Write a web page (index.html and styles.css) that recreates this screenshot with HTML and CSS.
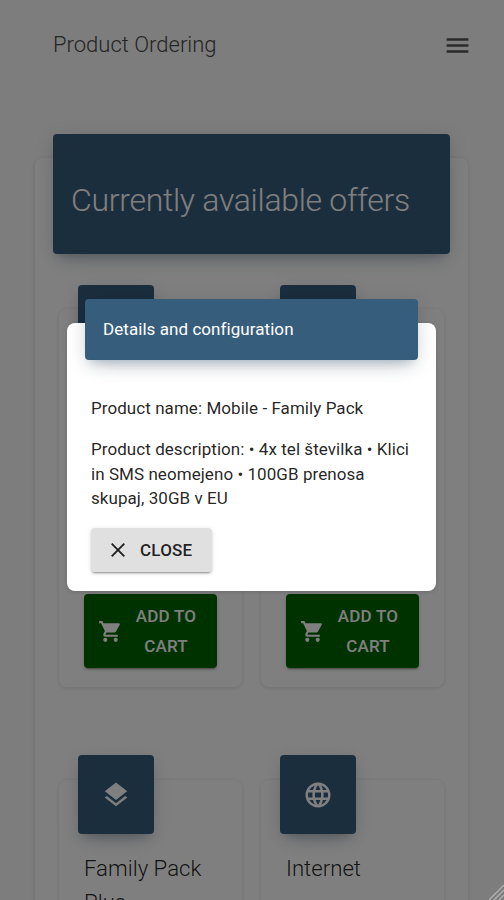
FILE: index.html
```html
<!DOCTYPE html>
<html lang="en">
<head>
<meta charset="utf-8">
<title>Product Ordering</title>
<link rel="stylesheet" href="styles.css">
</head>
<body>
<div class="page">
  <header class="toolbar">
    <div class="title">Product Ordering</div>
    <svg class="menu" viewBox="0 0 24 24"><path d="M3 6H21V8H3V6M3 11H21V13H3V11M3 16H21V18H3V16Z"/></svg>
  </header>
  <main class="offers">
    <div class="banner"><h1>Currently available offers</h1></div>
    <div class="grid">
      <article class="product">
        <div class="tile"></div>
        <button class="cart"><svg viewBox="0 0 24 24"><path d="M17 18a2 2 0 1 1 0 4 2 2 0 0 1 0-4M1 2h3.27l.94 2H20a1 1 0 0 1 1 1c0 .17-.05.34-.12.5l-3.58 6.47c-.34.61-1 1.03-1.75 1.03H8.1l-.9 1.63-.03.12a.25.25 0 0 0 .25.25H19v2H7a2 2 0 0 1-2-2c0-.35.09-.68.24-.96l1.36-2.45L3 4H1V2m6 16a2 2 0 1 1 0 4 2 2 0 0 1 0-4Z"/></svg><span>ADD TO CART</span></button>
      </article>
      <article class="product">
        <div class="tile"></div>
        <button class="cart"><svg viewBox="0 0 24 24"><path d="M17 18a2 2 0 1 1 0 4 2 2 0 0 1 0-4M1 2h3.27l.94 2H20a1 1 0 0 1 1 1c0 .17-.05.34-.12.5l-3.58 6.47c-.34.61-1 1.03-1.75 1.03H8.1l-.9 1.63-.03.12a.25.25 0 0 0 .25.25H19v2H7a2 2 0 0 1-2-2c0-.35.09-.68.24-.96l1.36-2.45L3 4H1V2m6 16a2 2 0 1 1 0 4 2 2 0 0 1 0-4Z"/></svg><span>ADD TO CART</span></button>
      </article>
      <article class="product">
        <div class="tile"><svg viewBox="0 0 24 24"><path d="M12 16 19.36 10.27 21 9 12 2 3 9 4.63 10.27M12 18.54 4.62 12.81 3 14.07 12 21.07 21 14.07 19.37 12.8 12 18.54Z"/></svg></div>
        <h2>Family Pack Plus</h2>
      </article>
      <article class="product">
        <div class="tile"><svg viewBox="0 0 24 24"><path d="M16.36 14c.08-.66.14-1.32.14-2s-.06-1.34-.14-2h3.38c.16.64.26 1.31.26 2s-.1 1.36-.26 2m-5.15 5.56c.6-1.11 1.06-2.31 1.38-3.56h2.95a8.03 8.03 0 0 1-4.33 3.56M14.34 14H9.66c-.1-.66-.16-1.32-.16-2s.06-1.35.16-2h4.68c.09.65.16 1.32.16 2s-.07 1.34-.16 2M12 19.96c-.83-1.2-1.5-2.53-1.91-3.96h3.82c-.41 1.43-1.08 2.76-1.91 3.96M8 8H5.08A7.92 7.92 0 0 1 9.4 4.44C8.8 5.55 8.35 6.75 8 8m-2.92 8H8c.35 1.25.8 2.45 1.4 3.56A8 8 0 0 1 5.08 16m-.82-2C4.1 13.36 4 12.69 4 12s.1-1.36.26-2h3.38c-.08.66-.14 1.32-.14 2s.06 1.34.14 2M12 4.03c.83 1.2 1.5 2.54 1.91 3.97h-3.82c.41-1.43 1.08-2.77 1.91-3.97M18.92 8h-2.95a15.7 15.7 0 0 0-1.38-3.56c1.84.63 3.37 1.9 4.33 3.56M12 2C6.47 2 2 6.5 2 12a10 10 0 1 0 10-10Z"/></svg></div>
        <h2>Internet</h2>
      </article>
    </div>
  </main>
</div>
<div class="overlay">
  <section class="dialog">
    <div class="dialog-title">Details and configuration</div>
    <p>Product name: Mobile - Family Pack</p>
    <p>Product description: • 4x tel številka • Klici in SMS neomejeno • 100GB prenosa skupaj, 30GB v EU</p>
    <button class="close"><svg viewBox="0 0 14 14"><path d="M.7.7 13.3 13.3M13.3.7.7 13.3"/></svg><span>CLOSE</span></button>
  </section>
</div>
<svg class="grip" viewBox="0 0 15 15"><path d="M0 15 15 0M5 15 15 5M10 15l5-5"/></svg>
</body>
</html>
```
FILE: styles.css
```css
* { box-sizing: border-box; }
body {
  margin: 0;
  height: 900px;
  overflow: hidden;
  background: #fafafa;
  color: rgba(0, 0, 0, .87);
  font-family: Roboto, "Liberation Sans", sans-serif;
  font-size: 17px;
  letter-spacing: .06px;
}
svg { fill: currentColor; flex: none; }
h1, h2, p { margin: 0; }
button { border: 0; font: inherit; font-weight: 500; color: inherit; letter-spacing: .2px; }
.page { height: 900px; overflow: hidden; }
.toolbar {
  height: 88px;
  padding: 0 32px 0 53px;
  display: flex;
  align-items: center;
  justify-content: space-between;
}
.title { font-size: 22px; font-weight: 300; color: #4a4a4a; letter-spacing: 0; }
.menu { width: 29px; height: 29px; margin-top: 2px; color: #555; }
.offers {
  display: flow-root;
  width: 433px;
  height: 900px;
  margin: 70px 0 0 35px;
  padding: 0 18px;
  background: #fff;
  border-radius: 8px;
  box-shadow: 0 1px 4px rgba(0, 0, 0, .14);
}
.banner {
  height: 120px;
  margin-top: -24px;
  padding: 12px 18px 0;
  display: flex;
  align-items: center;
}
.banner, .tile, .dialog-title {
  background: #375d7d;
  color: #fff;
  border-radius: 4px;
  box-shadow: 0 12px 20px -10px rgba(55, 93, 125, .28), 0 4px 20px rgba(0, 0, 0, .12), 0 7px 8px -5px rgba(55, 93, 125, .2);
}
h1 { font-size: 32px; font-weight: 300; white-space: nowrap; letter-spacing: -.3px; }
.grid {
  margin: 55px 6px 0;
  display: grid;
  grid-template-columns: 183px 183px;
  grid-template-rows: 378px 378px;
  gap: 93px 19px;
}
.product {
  padding: 0 25px 19px;
  display: flex;
  flex-direction: column;
  justify-content: space-between;
  border-radius: 8px;
  background: #fff;
  box-shadow: 0 1px 4px rgba(0, 0, 0, .14);
}
.product:nth-child(n+3) { justify-content: flex-start; }
.tile {
  width: 76px;
  height: 79px;
  margin: -24px 0 0 -6px;
  display: flex;
  align-items: center;
  justify-content: center;
}
.product:nth-child(n+3) .tile { margin-top: -25px; }
.tile svg { width: 30px; height: 30px; margin-right: 1px; }
h2 { margin-top: 17px; font-size: 22.2px; font-weight: 300; line-height: 34px; letter-spacing: 0; }
.cart {
  width: 133px;
  height: 74px;
  padding: 0 14px;
  display: flex;
  align-items: center;
  gap: 6px;
  background: #006400;
  color: #fff;
  border-radius: 4px;
  line-height: 30px;
  box-shadow: 0 3px 1px -2px rgba(0, 0, 0, .2), 0 2px 2px rgba(0, 0, 0, .14), 0 1px 5px rgba(0, 0, 0, .12);
}
.cart svg { width: 25px; height: 25px; }
.cart span { flex: 1; text-align: center; }
.overlay {
  position: absolute;
  inset: 0;
  padding: 299px 68px 0 67px;
  background: rgba(0, 0, 0, .5);
}
.dialog {
  display: flow-root;
  height: 268px;
  margin-top: 24px;
  padding: 0 24px;
  border-radius: 8px;
  background: #fff;
  box-shadow: 0 1px 4px rgba(0, 0, 0, .14);
}
.dialog-title {
  width: 333px;
  height: 61px;
  margin: -24px -6px 36px;
  padding: 0 18px 1px;
  display: flex;
  align-items: center;
}
.dialog p { margin-bottom: 17px; line-height: 24.4px; }
.close {
  width: 120.5px;
  height: 44.5px;
  padding: 0 20px;
  display: flex;
  align-items: center;
  justify-content: flex-start;
  gap: 15px;
  background: #e0e0e0;
  border-radius: 4px;
  box-shadow: 0 3px 1px -2px rgba(0, 0, 0, .2), 0 2px 2px rgba(0, 0, 0, .14), 0 1px 5px rgba(0, 0, 0, .12);
}
.close svg { width: 14px; height: 14px; stroke: currentColor; stroke-width: 1.8; }
.grip {
  position: absolute;
  right: 0;
  bottom: 0;
  width: 15px;
  height: 15px;
  stroke: #b0b0b0;
  stroke-width: 1.4;
}
```
